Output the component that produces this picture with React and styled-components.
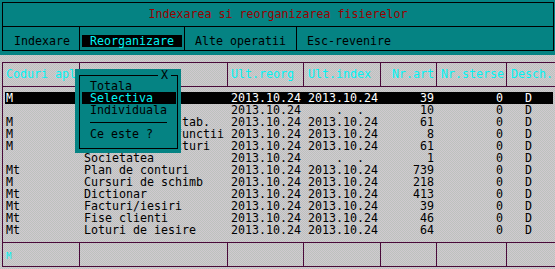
import styled, { createGlobalStyle } from "styled-components";

const TEAL = "#058383";
const LINE = "#4a0a3a";
const CYAN = "#00f4f4";

const GlobalStyle = createGlobalStyle`
    html, body {
        margin: 0;
        padding: 0;
    }
    body {
        font-family: "DejaVu Sans Mono", "Liberation Mono", monospace;
        font-size: 11.63px;
        background: repeating-conic-gradient(#d0c9d0 0 25%, #bcc2bd 0 50%) 0 0 / 2px 2px;
    }
`;

// per column: header alignment/padding, cell alignment/padding
const columns = [
    { headAlign: "left", head: "0 0 0 3px", align: "left", cell: "0 0 0 3px" },
    { headAlign: "left", head: "0 0 0 4px", align: "left", cell: "0 0 0 4px" },
    { headAlign: "left", head: "0 0 0 3px", align: "left", cell: "0 0 0 3px" },
    { headAlign: "left", head: "0 0 0 4px", align: "left", cell: "0 0 0 4px" },
    { headAlign: "right", head: "0 2px 0 0", align: "right", cell: "0 3px 0 0" },
    { headAlign: "left", head: "0 0 0 4px", align: "right", cell: "0 4px 0 0" },
    { headAlign: "left", head: "0 0 0 4px", align: "left", cell: "0 0 0 18px" },
];

const headers = ["Coduri aplicatie", "", "Ult.reorg", "Ult.index", "Nr.art", "Nr.sterse", "Desch."];

const NO_DATE = "    .  .  ";

const rows = [
    ["M", "", "2013.10.24", "2013.10.24", "39", "0", "D"],
    ["", "", "2013.10.24", NO_DATE, "10", "0", "D"],
    ["M", "Nomenclatoare tab.", "2013.10.24", "2013.10.24", "61", "0", "D"],
    ["M", "Operatori si functii", "2013.10.24", "2013.10.24", "8", "0", "D"],
    ["M", "Conturi si facturi", "2013.10.24", "2013.10.24", "61", "0", "D"],
    ["", "Societatea", "2013.10.24", NO_DATE, "1", "0", "D"],
    ["Mt", "Plan de conturi", "2013.10.24", "2013.10.24", "739", "0", "D"],
    ["M", "Cursuri de schimb", "2013.10.24", "2013.10.24", "218", "0", "D"],
    ["Mt", "Dictionar", "2013.10.24", "2013.10.24", "413", "0", "D"],
    ["Mt", "Facturi/iesiri", "2013.10.24", "2013.10.24", "39", "0", "D"],
    ["Mt", "Fise clienti", "2013.10.24", "2013.10.24", "46", "0", "D"],
    ["Mt", "Loturi de iesire", "2013.10.24", "2013.10.24", "64", "0", "D"],
];

const menu = [
    { label: "Indexare", pad: 11 },
    { label: "Reorganizare", pad: 2, active: true },
    { label: "Alte operatii", pad: 10 },
    { label: "Esc-revenire", pad: 10 },
];

const App = () => {
    return (
        <>
            <GlobalStyle />
            <Screen>
                <TopPanel>
                    <Frame>
                        <TitleBar>Indexarea si reorganizarea fisierelor</TitleBar>
                        <MenuBar>
                            {menu.map((m, i) => (
                                <MenuCell key={m.label} $pad={m.pad} $last={i === menu.length - 1}>
                                    <MenuLabel $active={m.active}>{m.label}</MenuLabel>
                                </MenuCell>
                            ))}
                        </MenuBar>
                    </Frame>
                </TopPanel>

                <Table>
                    <HeadRow>
                        {headers.map((h, i) => (
                            <HeadCell key={i} $col={columns[i]} $last={i === headers.length - 1}>
                                {h}
                            </HeadCell>
                        ))}
                    </HeadRow>
                    <Body>
                        {rows.map((r, ri) => (
                            <Row key={ri} $selected={ri === 0}>
                                {r.map((c, ci) => (
                                    <Cell key={ci} $col={columns[ci]}>{c}</Cell>
                                ))}
                            </Row>
                        ))}
                    </Body>
                    <FootRow>
                        {columns.map((c, i) => (
                            <FootCell key={i} $last={i === columns.length - 1}>
                                {i === 0 && <FootMark>M</FootMark>}
                            </FootCell>
                        ))}
                    </FootRow>
                </Table>

                <Popup>
                    <PopupFrame>
                        <CloseMark>X</CloseMark>
                        <PopupItem>Totala</PopupItem>
                        <PopupItem $active>Selectiva</PopupItem>
                        <PopupItem>Individuala</PopupItem>
                        <PopupRule />
                        <PopupItem>Ce este ?</PopupItem>
                    </PopupFrame>
                </Popup>
            </Screen>
        </>
    );
};

const Screen = styled.div`
    position: relative;
    width: 555px;
    height: 269px;
    overflow: hidden;
`;

const TopPanel = styled.div`
    height: 55px;
    box-sizing: border-box;
    padding: 2px 0 0 2px;
    background: ${TEAL};
`;

const Frame = styled.div`
    width: 552px;
    box-sizing: border-box;
    border: 1px solid #000;
`;

const TitleBar = styled.div`
    height: 23px;
    line-height: 23px;
    text-align: center;
    color: #9a0000;
    border-bottom: 1px solid #000;
    white-space: pre;
`;

const MenuBar = styled.div`
    display: grid;
    grid-template-columns: 77px 105px 112px 1fr;
    height: 23px;
`;

const MenuCell = styled.div`
    box-sizing: border-box;
    padding: 8px 0 0 ${(p) => p.$pad}px;
    border-right: ${(p) => (p.$last ? "none" : "1px solid #000")};
    line-height: 12px;
    color: #000;
    white-space: pre;
`;

const MenuLabel = styled.span`
    display: inline-block;
    ${(p) =>
        p.$active &&
        `
        width: 100px;
        box-sizing: border-box;
        padding-left: 8px;
        background: #000;
        color: ${CYAN};
    `}
`;

const Table = styled.div`
    width: 554px;
    margin: 7px 0 0 2px;
    box-sizing: border-box;
    border: 1px solid ${LINE};
`;

const gridCols = "77px 148px 76px 77px 56px 70px 48px";

const HeadRow = styled.div`
    display: grid;
    grid-template-columns: ${gridCols};
    height: 24px;
    box-sizing: border-box;
    border-bottom: 1px solid ${LINE};
`;

const HeadCell = styled.div`
    box-sizing: border-box;
    padding: ${(p) => p.$col.head};
    text-align: ${(p) => p.$col.headAlign};
    line-height: 23px;
    color: ${CYAN};
    white-space: pre;
    overflow: hidden;
    border-right: ${(p) => (p.$last ? "none" : `1px solid ${LINE}`)};
`;

const Body = styled.div`
    padding: 5px 0 6px;
    border-bottom: 1px solid ${LINE};
`;

const Row = styled.div`
    display: grid;
    grid-template-columns: ${gridCols};
    height: 12px;
    line-height: 12px;
    color: ${(p) => (p.$selected ? "#fff" : "#000")};
    background: ${(p) =>
        p.$selected ? "linear-gradient(#000, #000) 2px 0 / calc(100% - 4px) 100% no-repeat" : "none"};
`;

const Cell = styled.div`
    box-sizing: border-box;
    padding: ${(p) => p.$col.cell};
    text-align: ${(p) => p.$col.align};
    white-space: pre;
    overflow: hidden;
`;

const FootRow = styled.div`
    display: grid;
    grid-template-columns: ${gridCols};
    height: 23px;
`;

const FootCell = styled.div`
    box-sizing: border-box;
    padding: 5px 0 0 3px;
    border-right: ${(p) => (p.$last ? "none" : `1px solid ${LINE}`)};
`;

const FootMark = styled.span`
    font-size: 9px;
    line-height: 10px;
    color: ${CYAN};
`;

const Popup = styled.div`
    position: absolute;
    left: 75px;
    top: 69px;
    width: 106px;
    height: 84px;
    box-sizing: border-box;
    padding: 6px 3px 4px 4px;
    background: ${TEAL};
`;

const PopupFrame = styled.div`
    position: relative;
    height: 100%;
    box-sizing: border-box;
    border: 1px solid #000;
    padding: 4px 1px 0 2px;
`;

const CloseMark = styled.span`
    position: absolute;
    top: -7px;
    right: 6px;
    padding: 0 3px;
    line-height: 12px;
    background: ${TEAL};
    color: #000;
`;

const PopupItem = styled.div`
    height: 12px;
    line-height: 12px;
    padding-left: 8px;
    white-space: pre;
    color: ${(p) => (p.$active ? CYAN : "#000")};
    background: ${(p) => (p.$active ? "#000" : "transparent")};
`;

const PopupRule = styled.div`
    height: 1px;
    margin: 6px 9px 5px 8px;
    background: #000;
`;

export default App;
